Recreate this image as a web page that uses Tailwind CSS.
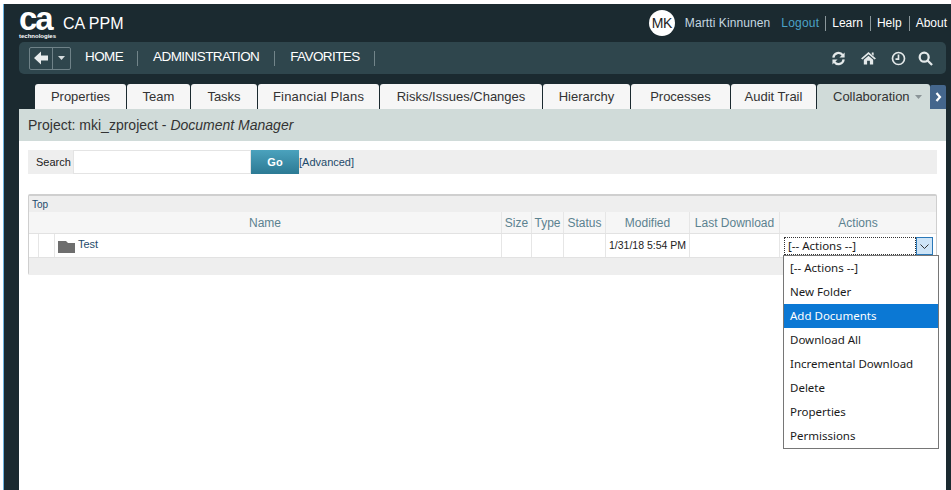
<!DOCTYPE html>
<html lang="en">
<head>
  <meta charset="UTF-8">
  <title>CA PPM</title>
  <script src="https://cdn.jsdelivr.net/npm/@tailwindcss/browser@4"></script>
</head>
<body class="bg-white overflow-hidden">
  <div class="w-[951px] h-[490px] overflow-hidden pt-[4px] pl-[3px] font-['Liberation_Sans',Arial,sans-serif]">
    <div class="h-[486px] bg-[#1b2a30] border-l border-[#6db3e0] flex flex-col pl-[15px] pr-[5px]">

      <!-- top header -->
      <div class="h-[38px] flex items-center shrink-0 text-white">
        <div class="w-[36px] h-[38px] flex flex-col items-start">
          <span class="text-[33px] font-bold tracking-[-2.2px] h-[29px] leading-[29px]">ca</span>
          <span class="text-[6px] font-bold leading-[7px] whitespace-nowrap">technologies</span>
        </div>
        <span class="ml-[8px] mt-[2px] text-[16px]">CA PPM</span>
        <div class="ml-auto flex items-center text-[12px]">
          <span class="w-[26px] h-[26px] rounded-full bg-white text-[#222] text-[14px] tracking-[-0.5px] flex items-center justify-center">MK</span>
          <span class="ml-[10px] text-[#c6d8e0] tracking-[0.1px]">Martti Kinnunen</span>
          <span class="ml-[11px] text-[#4ba3c7] tracking-[0.2px]">Logout</span>
          <span class="ml-[6px] h-[15px] border-l border-[#8b979b]"></span>
          <span class="ml-[6px]">Learn</span>
          <span class="ml-[7px] h-[15px] border-l border-[#8b979b]"></span>
          <span class="ml-[6px]">Help</span>
          <span class="ml-[7px] h-[15px] border-l border-[#8b979b]"></span>
          <span class="ml-[6px] mr-[-1px]">About</span>
        </div>
      </div>

      <!-- nav bar -->
      <div class="h-[32px] shrink-0 rounded-[5px] bg-[#2f464d] flex items-center pl-[10px] text-white text-[13.5px] tracking-[-0.6px]">
        <div class="w-[42px] h-[23px] border border-[#6f8288] rounded-[2px] flex items-center">
          <div class="w-[23px] h-full border-r border-[#6f8288] flex items-center justify-center">
            <svg width="16" height="16" viewBox="0 0 16 16"><path d="M8 1.5 L1 8 L8 14.5 L8 10.5 L15 10.5 L15 5.5 L8 5.5 Z" fill="#e8eced"/></svg>
          </div>
          <div class="flex-1 flex items-center justify-center">
            <svg width="7" height="4" viewBox="0 0 7 4"><path d="M0 0H7L3.5 4Z" fill="#d5dcde"/></svg>
          </div>
        </div>
        <span class="ml-[14px] mb-[2px]">HOME</span>
        <span class="ml-[14px] h-[15px] border-l border-[#72858a]"></span>
        <span class="ml-[15px] mb-[2px]">ADMINISTRATION</span>
        <span class="ml-[15px] h-[15px] border-l border-[#72858a]"></span>
        <span class="ml-[15px] mb-[2px]">FAVORITES</span>
        <span class="ml-[14px] h-[15px] border-l border-[#72858a]"></span>
        <div class="ml-auto flex items-center pr-[13px]">
          <svg width="15" height="15" viewBox="0 0 16 16" fill="none" stroke="#e4e9ea" stroke-width="2.4"><path d="M2.5 7 A5.5 5.5 0 0 1 12.5 4.5"/><path d="M13.5 9 A5.5 5.5 0 0 1 3.5 11.5"/><path d="M14.5 1.5 V7 H9Z" fill="#e4e9ea" stroke="none"/><path d="M1.5 14.5 V9 H7Z" fill="#e4e9ea" stroke="none"/></svg>
          <svg class="ml-[15px]" width="15" height="14" viewBox="0 0 16 15"><path d="M8 1 L16 8 L14.5 9.2 L8 3.6 L1.5 9.2 L0 8 Z M3 9.5 L8 5.2 L13 9.5 V14.5 H9.5 V10.5 H6.5 V14.5 H3 Z M11.5 1.5 H13.5 V5 L11.5 3.4 Z" fill="#e4e9ea"/></svg>
          <svg class="ml-[15px]" width="15" height="15" viewBox="0 0 16 16" fill="none" stroke="#e4e9ea" stroke-width="1.8"><circle cx="8" cy="8" r="6.4"/><path d="M8 3.8 V8.6 H4.8"/></svg>
          <svg class="ml-[12px]" width="15" height="15" viewBox="0 0 16 16" fill="none" stroke="#e4e9ea" stroke-width="2.4"><circle cx="6.6" cy="6.6" r="4.8"/><path d="M10.2 10.2 L15 15"/></svg>
        </div>
      </div>

      <!-- tabs -->
      <div class="h-[25px] mt-[10px] shrink-0 flex pl-[16px] text-[13px] text-[#333] gap-px">
        <div class="w-[91px] bg-[#f6f6f6] rounded-t-[3px] flex items-center justify-center">Properties</div>
        <div class="w-[63px] bg-[#f6f6f6] rounded-t-[3px] flex items-center justify-center">Team</div>
        <div class="w-[66px] bg-[#f6f6f6] rounded-t-[3px] flex items-center justify-center">Tasks</div>
        <div class="w-[121px] bg-[#f6f6f6] rounded-t-[3px] flex items-center justify-center tracking-[0.2px]">Financial Plans</div>
        <div class="w-[162px] bg-[#f6f6f6] rounded-t-[3px] flex items-center justify-center">Risks/Issues/Changes</div>
        <div class="w-[87px] bg-[#f6f6f6] rounded-t-[3px] flex items-center justify-center">Hierarchy</div>
        <div class="w-[99px] bg-[#f6f6f6] rounded-t-[3px] flex items-center justify-center">Processes</div>
        <div class="w-[85px] bg-[#f6f6f6] rounded-t-[3px] flex items-center justify-center">Audit Trail</div>
        <div class="w-[113px] bg-[#d0dbd9] rounded-t-[3px] flex items-center pl-[16px]">
          Collaboration
          <svg class="ml-[5px]" width="7" height="4" viewBox="0 0 7 4"><path d="M0 0H7L3.5 4Z" fill="#8a9497"/></svg>
        </div>
        <div class="w-[16px] h-[24px] mt-[1px] ml-[-1px] bg-[#44668c] rounded-t-[2px] flex items-center justify-center">
          <svg width="7" height="10" viewBox="0 0 7 10" fill="none" stroke="#fff" stroke-width="2.2"><path d="M1.5 1 L5 5 L1.5 9"/></svg>
        </div>
      </div>

      <!-- content -->
      <div class="flex-1 bg-white relative min-h-0">
        <div class="h-[32px] bg-[#d0dbd9] flex items-center pl-[9px] text-[14px] text-[#333]">
          <span>Project: mki_zproject - <i>Document Manager</i></span>
        </div>

        <div class="mt-[9px] mx-[9px] h-[24px] bg-[#eeeeee] flex items-center text-[11px]">
          <span class="ml-[8px] w-[37px] text-[#222]">Search</span>
          <div class="w-[178px] h-full bg-white border border-[#e4e4e4]"></div>
          <div class="w-[48px] h-full bg-gradient-to-b from-[#4ba2bd] to-[#2c7a94] text-white font-bold flex items-center justify-center">Go</div>
          <span class="text-[#1d4a6b]">[Advanced]</span>
        </div>

        <div class="mt-[20px] mx-[9px] h-[81px] border border-[#cfcfcf] border-t-2 rounded-[2px] text-[11px]">
          <div class="h-[16px] bg-[#eeeeee] pl-[3px] flex items-center text-[#1d4a6b] text-[10px]">Top</div>
          <div class="h-[22px] bg-[#f6f6f6] border-b border-[#e2e2e2] flex text-[12px] text-[#5c8290]">
            <div class="w-[472px] flex items-center justify-center">Name</div>
            <div class="w-[30px] border-l border-[#e6e6e6] flex items-center justify-center">Size</div>
            <div class="w-[32px] border-l border-[#e6e6e6] flex items-center justify-center">Type</div>
            <div class="w-[42px] border-l border-[#e6e6e6] flex items-center justify-center">Status</div>
            <div class="w-[84px] border-l border-[#e6e6e6] flex items-center justify-center">Modified</div>
            <div class="w-[90px] border-l border-[#e6e6e6] flex items-center justify-center">Last Download</div>
            <div class="flex-1 border-l border-[#e6e6e6] flex items-center justify-center">Actions</div>
          </div>
          <div class="h-[24px] border-b border-[#e2e2e2] flex bg-white text-[#1d4a6b]">
            <div class="w-[10px] border-r border-[#e6e6e6]"></div>
            <div class="w-[16px] border-r border-[#e6e6e6]"></div>
            <div class="w-[446px] flex pl-[3px]">
              <svg class="mt-[6px]" width="17" height="13" viewBox="0 0 17 13"><path d="M0 1 H8 L10 3 H17 V13 H0 Z" fill="#6e6e6e"/></svg>
              <span class="ml-[3px] mt-[4px] leading-[13px]">Test</span>
            </div>
            <div class="w-[30px] border-l border-[#e6e6e6]"></div>
            <div class="w-[32px] border-l border-[#e6e6e6]"></div>
            <div class="w-[42px] border-l border-[#e6e6e6]"></div>
            <div class="w-[84px] border-l border-[#e6e6e6] flex items-center pl-[3px] text-[10.5px] text-[#222]">1/31/18 5:54 PM</div>
            <div class="w-[90px] border-l border-[#e6e6e6]"></div>
            <div class="flex-1 border-l border-[#e6e6e6]"></div>
          </div>
          <div class="h-[17px] bg-[#eeeeee]"></div>
        </div>

        <!-- open select -->
        <div class="absolute left-[764px] top-[128px] w-[156px] font-['Noto_Sans',sans-serif] text-[11.5px] text-[#1a1a1a]">
          <div class="h-[18px] ml-[1px] w-[149px] flex bg-white">
            <div class="flex-1 border border-dotted border-[#333] pl-[3px] flex items-center leading-none">[-- Actions --]</div>
            <div class="w-[17px] bg-[#cde4f7] border border-[#2a78b8] flex items-center justify-center">
              <svg width="9" height="5" viewBox="0 0 9 5" fill="none" stroke="#333" stroke-width="1"><path d="M0.5 0.5 L4.5 4.5 L8.5 0.5"/></svg>
            </div>
          </div>
          <div class="bg-white border border-[#767676] w-[156px]">
            <div class="h-[24px] flex items-center pl-[6px]">[-- Actions --]</div>
            <div class="h-[24px] flex items-center pl-[6px]">New Folder</div>
            <div class="h-[24px] flex items-center pl-[6px] bg-[#0b78d4] text-white">Add Documents</div>
            <div class="h-[24px] flex items-center pl-[6px]">Download All</div>
            <div class="h-[24px] flex items-center pl-[6px]">Incremental Download</div>
            <div class="h-[24px] flex items-center pl-[6px]">Delete</div>
            <div class="h-[24px] flex items-center pl-[6px]">Properties</div>
            <div class="h-[24px] flex items-center pl-[6px]">Permissions</div>
          </div>
        </div>
      </div>
    </div>
  </div>
</body>
</html>
